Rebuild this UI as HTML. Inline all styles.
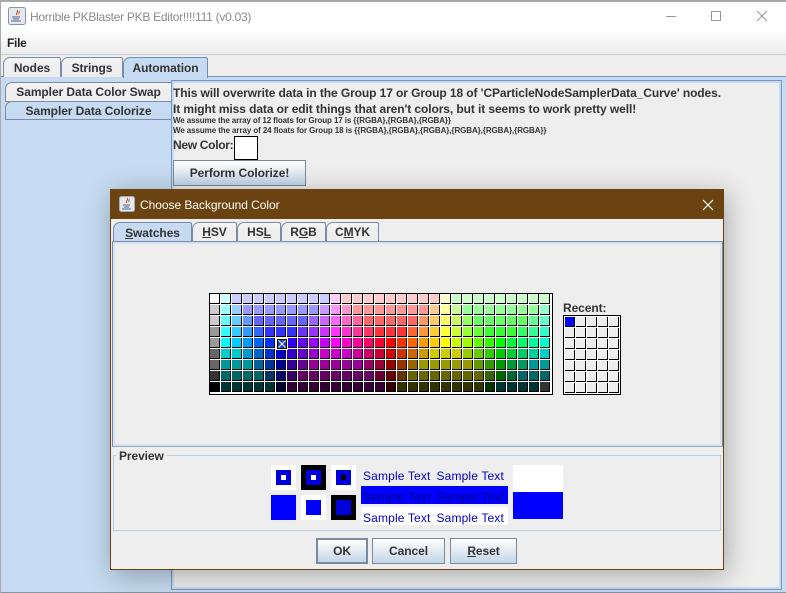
<!DOCTYPE html>
<html><head><meta charset="utf-8"><style>
html,body{margin:0;padding:0;width:786px;height:593px;overflow:hidden;background:#eee}
*{box-sizing:border-box}
body{font-family:"Liberation Sans",sans-serif;color:#333;position:relative}
.a,.t,.btn,.tab{position:absolute}
.t{white-space:nowrap;font-weight:bold;font-size:12px;line-height:14px;color:#333;letter-spacing:-.09px}
u{text-decoration:underline}
.tab{border:1px solid #7a8aa8;border-bottom:none;border-radius:7px 2px 0 0;background:linear-gradient(#f6f6f6,#eee 40%);font-weight:bold;font-size:12px;letter-spacing:-.07px;text-align:center;color:#333;white-space:nowrap}
.btn{border:1px solid #7a8a9c;background:linear-gradient(#fff,#eef2f6 30%,#c3d6e8);font-weight:bold;font-size:12px;letter-spacing:-.07px;text-align:center;color:#333;white-space:nowrap}
#g{left:209px;top:293px;width:344px;height:102px;border:1px solid #000;padding:0 1px 1px 0;background:#fff;display:flex;flex-wrap:wrap;align-content:flex-start}
#g i{display:block;width:10px;height:10px;margin:0 1px 1px 0;border-right:1px solid #000;border-bottom:1px solid #000}
#r{left:563px;top:315px;width:58px;height:80px;border:1px solid #000;padding:1px 0 0 1px;background:#fff;display:flex;flex-wrap:wrap;align-content:flex-start}
#r i{display:block;width:10px;height:10px;margin:0 1px 1px 0;background:#eee;border-right:1px solid #000;border-bottom:1px solid #000}
.s{font-size:12px;color:#0000cc;font-weight:normal;letter-spacing:.15px}
.s span{margin-left:6px}
</style></head><body>
<!-- main window -->
<div class="a" style="left:0;top:0;width:786px;height:2px;background:#a8a8a8"></div>
<div class="a" style="left:0;top:2px;width:786px;height:52px;background:linear-gradient(#fff,#fff 55%,#ececec)"></div>
<div class="a" style="left:0;top:54px;width:786px;height:1px;background:#ccc"></div>
<div class="a" style="left:0;top:0;width:1px;height:593px;background:#aaa"></div>
<svg class="a" style="left:8px;top:7px" width="18" height="18" viewBox="0 0 18 18"><rect x=".5" y=".5" width="17" height="17" rx="2" fill="#e4e8ee" stroke="#8a94a4"/><path d="M9 3c2 2-2 3 0 5M11 4c1 1-1 2 0 3" stroke="#c8501c" fill="none"/><path d="M4 10h8M5 12h6M3 14h10" stroke="#47658f" stroke-width="1"/></svg>
<div class="t" style="left:30px;top:9px;line-height:16px;font-weight:normal;color:#8a8a8a;letter-spacing:-.27px">Horrible PKBlaster PKB Editor!!!!111 (v0.03)</div>
<div class="t" style="left:7px;top:36px;color:#222;letter-spacing:-.3px">File</div>
<svg class="a" style="left:660px;top:8px" width="110" height="16" viewBox="0 0 110 16"><path d="M6 8.5h10" stroke="#999"/><rect x="51.5" y="3.5" width="9" height="9" fill="none" stroke="#999"/><path d="M97 3l10 10M107 3l-10 10" stroke="#999"/></svg>

<!-- blue outer panel -->
<div class="a" style="left:1px;top:76px;width:785px;height:517px;background:#c6dbf1;border-top:1px solid #7a95bd;border-bottom:1px solid #8a94a4"></div>
<div class="tab" style="left:3px;top:57px;width:58px;height:20px;line-height:20px">Nodes</div>
<div class="tab" style="left:61px;top:57px;width:62px;height:20px;line-height:20px">Strings</div>
<div class="tab" style="left:123px;top:57px;width:85px;height:21px;line-height:20px;background:#c6dbf1;border-color:#6f8db8;border-bottom:none">Automation</div>

<!-- vertical tabs -->
<div class="tab" style="left:5px;top:82px;width:167px;height:20px;line-height:19px;border-bottom:1px solid #7a8aa8">Sampler Data Color Swap</div>
<div class="tab" style="left:5px;top:101px;width:167px;height:19px;line-height:19px;background:#c6dbf1;border-bottom:1px solid #7a8aa8">Sampler Data Colorize</div>

<!-- right panel -->
<div class="a" style="left:171px;top:80px;width:611px;height:510px;border:1px solid #7a95bd;background:#eee;box-shadow:inset 0 0 0 2px #c6dbf1"></div>
<div class="a" style="left:174px;top:83px;width:605px;height:504px;background:#eee"></div>
<div class="t" style="left:173px;top:86px">This will overwrite data in the Group 17 or Group 18 of 'CParticleNodeSamplerData_Curve' nodes.</div>
<div class="t" style="left:173px;top:102px">It might miss data or edit things that aren't colors, but it seems to work pretty well!</div>
<div class="t" style="left:173px;top:115px;font-size:8px;line-height:11px;letter-spacing:-.11px">We assume the array of 12 floats for Group 17 is {{RGBA},{RGBA},{RGBA}}</div>
<div class="t" style="left:173px;top:125px;font-size:8px;line-height:11px;letter-spacing:-.09px">We assume the array of 24 floats for Group 18 is {{RGBA},{RGBA},{RGBA},{RGBA},{RGBA},{RGBA}}</div>
<div class="t" style="left:173px;top:138px;letter-spacing:-.3px">New Color:</div>
<div class="a" style="left:234px;top:136px;width:24px;height:24px;background:#fff;border:1px solid #000"></div>
<div class="btn" style="left:173px;top:160px;width:133px;height:26px;line-height:25px">Perform Colorize!</div>

<!-- dialog -->
<div class="a" style="left:110px;top:189px;width:614px;height:381px;background:#eee;border:1px solid #6b4310;border-top:none;box-shadow:3px 5px 26px rgba(0,0,0,.3)"></div>
<div class="a" style="left:110px;top:189px;width:614px;height:30px;background:#6b4310"></div>
<svg class="a" style="left:119px;top:196px" width="16" height="16" viewBox="0 0 16 16"><rect x=".5" y=".5" width="15" height="15" rx="2" fill="#e4e8ee" stroke="#aab"/><path d="M8 2c2 2-2 3 0 5M10 3c1 1-1 2 0 3" stroke="#c8501c" fill="none"/><path d="M4 9h7M5 11h5M3 13h9" stroke="#47658f"/></svg>
<div class="t" style="left:140px;top:198px;font-weight:normal;color:#fff;letter-spacing:-.05px">Choose Background Color</div>
<svg class="a" style="left:701px;top:198px" width="14" height="14" viewBox="0 0 14 14"><path d="M2 2l10 10M12 2L2 12" stroke="#fff" stroke-width="1.2"/></svg>

<div class="tab" style="left:113px;top:222px;width:79px;height:20px;line-height:20px;background:#c6dbf1"><u>S</u>watches</div>
<div class="tab" style="left:192px;top:222px;width:45px;height:19px;line-height:19px"><u>H</u>SV</div>
<div class="tab" style="left:237px;top:222px;width:44px;height:19px;line-height:19px">HS<u>L</u></div>
<div class="tab" style="left:281px;top:222px;width:45px;height:19px;line-height:19px">R<u>G</u>B</div>
<div class="tab" style="left:326px;top:222px;width:53px;height:19px;line-height:19px">C<u>M</u>YK</div>
<div class="a" style="left:112px;top:241px;width:611px;height:206px;border:1px solid #7a8aa8;border-bottom-color:#9aa6ba;background:#eee;box-shadow:inset 0 0 0 2px #d5e2f0"></div>
<div class="a" style="left:192px;top:241px;width:531px;height:1px;background:#7a8aa8"></div>

<div class="a" id="g"><i style="background:#fff"></i><i style="background:#cff"></i><i style="background:#ccf"></i><i style="background:#ccf"></i><i style="background:#ccf"></i><i style="background:#ccf"></i><i style="background:#ccf"></i><i style="background:#ccf"></i><i style="background:#ccf"></i><i style="background:#ccf"></i><i style="background:#ccf"></i><i style="background:#fcf"></i><i style="background:#fcc"></i><i style="background:#fcc"></i><i style="background:#fcc"></i><i style="background:#fcc"></i><i style="background:#fcc"></i><i style="background:#fcc"></i><i style="background:#fcc"></i><i style="background:#fcc"></i><i style="background:#fcc"></i><i style="background:#ffc"></i><i style="background:#cfc"></i><i style="background:#cfc"></i><i style="background:#cfc"></i><i style="background:#cfc"></i><i style="background:#cfc"></i><i style="background:#cfc"></i><i style="background:#cfc"></i><i style="background:#cfc"></i><i style="background:#cfc"></i><i style="background:#ccc"></i><i style="background:#9ff"></i><i style="background:#9cf"></i><i style="background:#99f"></i><i style="background:#99f"></i><i style="background:#99f"></i><i style="background:#99f"></i><i style="background:#99f"></i><i style="background:#99f"></i><i style="background:#99f"></i><i style="background:#c9f"></i><i style="background:#f9f"></i><i style="background:#f9c"></i><i style="background:#f99"></i><i style="background:#f99"></i><i style="background:#f99"></i><i style="background:#f99"></i><i style="background:#f99"></i><i style="background:#f99"></i><i style="background:#f99"></i><i style="background:#fc9"></i><i style="background:#ff9"></i><i style="background:#cf9"></i><i style="background:#9f9"></i><i style="background:#9f9"></i><i style="background:#9f9"></i><i style="background:#9f9"></i><i style="background:#9f9"></i><i style="background:#9f9"></i><i style="background:#9f9"></i><i style="background:#9fc"></i><i style="background:#ccc"></i><i style="background:#6ff"></i><i style="background:#6cf"></i><i style="background:#69f"></i><i style="background:#66f"></i><i style="background:#66f"></i><i style="background:#66f"></i><i style="background:#66f"></i><i style="background:#66f"></i><i style="background:#96f"></i><i style="background:#c6f"></i><i style="background:#f6f"></i><i style="background:#f6c"></i><i style="background:#f69"></i><i style="background:#f66"></i><i style="background:#f66"></i><i style="background:#f66"></i><i style="background:#f66"></i><i style="background:#f66"></i><i style="background:#f96"></i><i style="background:#fc6"></i><i style="background:#ff6"></i><i style="background:#cf6"></i><i style="background:#9f6"></i><i style="background:#6f6"></i><i style="background:#6f6"></i><i style="background:#6f6"></i><i style="background:#6f6"></i><i style="background:#6f6"></i><i style="background:#6f9"></i><i style="background:#6fc"></i><i style="background:#999"></i><i style="background:#3ff"></i><i style="background:#3cf"></i><i style="background:#39f"></i><i style="background:#36f"></i><i style="background:#33f"></i><i style="background:#33f"></i><i style="background:#33f"></i><i style="background:#63f"></i><i style="background:#93f"></i><i style="background:#c3f"></i><i style="background:#f3f"></i><i style="background:#f3c"></i><i style="background:#f39"></i><i style="background:#f36"></i><i style="background:#f33"></i><i style="background:#f33"></i><i style="background:#f33"></i><i style="background:#f63"></i><i style="background:#f93"></i><i style="background:#fc3"></i><i style="background:#ff3"></i><i style="background:#cf3"></i><i style="background:#9f3"></i><i style="background:#6f3"></i><i style="background:#3f3"></i><i style="background:#3f3"></i><i style="background:#3f3"></i><i style="background:#3f6"></i><i style="background:#3f9"></i><i style="background:#3fc"></i><i style="background:#999"></i><i style="background:#0ff"></i><i style="background:#0cf"></i><i style="background:#09f"></i><i style="background:#06f"></i><i style="background:#03f"></i><i style="background:#00f"></i><i style="background:#30f"></i><i style="background:#60f"></i><i style="background:#90f"></i><i style="background:#c0f"></i><i style="background:#f0f"></i><i style="background:#f0c"></i><i style="background:#f09"></i><i style="background:#f06"></i><i style="background:#f03"></i><i style="background:#f00"></i><i style="background:#f30"></i><i style="background:#f60"></i><i style="background:#f90"></i><i style="background:#fc0"></i><i style="background:#ff0"></i><i style="background:#cf0"></i><i style="background:#9f0"></i><i style="background:#6f0"></i><i style="background:#3f0"></i><i style="background:#0f0"></i><i style="background:#0f3"></i><i style="background:#0f6"></i><i style="background:#0f9"></i><i style="background:#0fc"></i><i style="background:#666"></i><i style="background:#0cc"></i><i style="background:#0cc"></i><i style="background:#09c"></i><i style="background:#06c"></i><i style="background:#03c"></i><i style="background:#00c"></i><i style="background:#30c"></i><i style="background:#60c"></i><i style="background:#90c"></i><i style="background:#c0c"></i><i style="background:#c0c"></i><i style="background:#c0c"></i><i style="background:#c09"></i><i style="background:#c06"></i><i style="background:#c03"></i><i style="background:#c00"></i><i style="background:#c30"></i><i style="background:#c60"></i><i style="background:#c90"></i><i style="background:#cc0"></i><i style="background:#cc0"></i><i style="background:#cc0"></i><i style="background:#9c0"></i><i style="background:#6c0"></i><i style="background:#3c0"></i><i style="background:#0c0"></i><i style="background:#0c3"></i><i style="background:#0c6"></i><i style="background:#0c9"></i><i style="background:#0cc"></i><i style="background:#666"></i><i style="background:#099"></i><i style="background:#099"></i><i style="background:#099"></i><i style="background:#069"></i><i style="background:#039"></i><i style="background:#009"></i><i style="background:#309"></i><i style="background:#609"></i><i style="background:#909"></i><i style="background:#909"></i><i style="background:#909"></i><i style="background:#909"></i><i style="background:#909"></i><i style="background:#906"></i><i style="background:#903"></i><i style="background:#900"></i><i style="background:#930"></i><i style="background:#960"></i><i style="background:#990"></i><i style="background:#990"></i><i style="background:#990"></i><i style="background:#990"></i><i style="background:#990"></i><i style="background:#690"></i><i style="background:#390"></i><i style="background:#090"></i><i style="background:#093"></i><i style="background:#096"></i><i style="background:#099"></i><i style="background:#099"></i><i style="background:#333"></i><i style="background:#066"></i><i style="background:#066"></i><i style="background:#066"></i><i style="background:#066"></i><i style="background:#036"></i><i style="background:#006"></i><i style="background:#306"></i><i style="background:#606"></i><i style="background:#606"></i><i style="background:#606"></i><i style="background:#606"></i><i style="background:#606"></i><i style="background:#606"></i><i style="background:#606"></i><i style="background:#603"></i><i style="background:#600"></i><i style="background:#630"></i><i style="background:#660"></i><i style="background:#660"></i><i style="background:#660"></i><i style="background:#660"></i><i style="background:#660"></i><i style="background:#660"></i><i style="background:#660"></i><i style="background:#360"></i><i style="background:#060"></i><i style="background:#063"></i><i style="background:#066"></i><i style="background:#066"></i><i style="background:#066"></i><i style="background:#000"></i><i style="background:#033"></i><i style="background:#033"></i><i style="background:#033"></i><i style="background:#033"></i><i style="background:#033"></i><i style="background:#003"></i><i style="background:#303"></i><i style="background:#303"></i><i style="background:#303"></i><i style="background:#303"></i><i style="background:#303"></i><i style="background:#303"></i><i style="background:#303"></i><i style="background:#303"></i><i style="background:#303"></i><i style="background:#300"></i><i style="background:#330"></i><i style="background:#330"></i><i style="background:#330"></i><i style="background:#330"></i><i style="background:#330"></i><i style="background:#330"></i><i style="background:#330"></i><i style="background:#330"></i><i style="background:#030"></i><i style="background:#033"></i><i style="background:#033"></i><i style="background:#033"></i><i style="background:#033"></i><i style="background:#333"></i></div>
<!-- selected swatch marker -->
<div class="a" style="left:276px;top:338px;width:12px;height:12px;background:#ffffb0"></div>
<svg class="a" style="left:277px;top:339px" width="10" height="10" viewBox="0 0 10 10"><rect x=".5" y=".5" width="9" height="9" fill="#1a40d8" stroke="#000"/><path d="M1.5 1.5l7 7M8.5 1.5l-7 7" stroke="#fff"/></svg>

<div class="t" style="left:563px;top:301px">Recent:</div>
<div class="a" id="r"><i style="background:#00f"></i><i></i><i></i><i></i><i></i><i></i><i></i><i></i><i></i><i></i><i></i><i></i><i></i><i></i><i></i><i></i><i></i><i></i><i></i><i></i><i></i><i></i><i></i><i></i><i></i><i></i><i></i><i></i><i></i><i></i><i></i><i></i><i></i><i></i><i></i></div>

<!-- preview -->
<div class="a" style="left:113px;top:455px;width:608px;height:76px;border:1px solid #b8cde0"></div>
<div class="t" style="left:116px;top:449px;background:#eee;padding:0 3px">Preview</div>

<div class="a" style="left:271px;top:465px;width:25px;height:25px;background:#fff"></div>
<div class="a" style="left:276px;top:470px;width:15px;height:15px;background:#00d"></div>
<div class="a" style="left:281px;top:475px;width:5px;height:5px;background:#fff"></div>
<div class="a" style="left:301px;top:465px;width:25px;height:25px;background:#000"></div>
<div class="a" style="left:306px;top:470px;width:15px;height:15px;background:#00d"></div>
<div class="a" style="left:311px;top:475px;width:5px;height:5px;background:#fff"></div>
<div class="a" style="left:331px;top:465px;width:25px;height:25px;background:#fff"></div>
<div class="a" style="left:336px;top:470px;width:15px;height:15px;background:#00d"></div>
<div class="a" style="left:341px;top:475px;width:5px;height:5px;background:#000"></div>
<div class="a" style="left:271px;top:495px;width:25px;height:25px;background:#00f"></div>
<div class="a" style="left:301px;top:495px;width:25px;height:25px;background:#fff"></div>
<div class="a" style="left:306px;top:500px;width:15px;height:15px;background:#00f"></div>
<div class="a" style="left:331px;top:495px;width:25px;height:25px;background:#000"></div>
<div class="a" style="left:336px;top:500px;width:15px;height:15px;background:#00d"></div>

<div class="t s" style="left:363px;top:469px">Sample Text<span>Sample Text</span></div>
<div class="a" style="left:361px;top:486px;width:147px;height:18px;background:#00f"></div>
<div class="t s" style="left:363px;top:490px;color:#000080">Sample Text<span>Sample Text</span></div>
<div class="a" style="left:361px;top:507px;width:147px;height:18px;background:#fff"></div>
<div class="t s" style="left:363px;top:511px">Sample Text<span>Sample Text</span></div>
<div class="a" style="left:513px;top:465px;width:50px;height:27px;background:#fff"></div>
<div class="a" style="left:513px;top:492px;width:50px;height:27px;background:#00f"></div>

<div class="btn" style="left:316px;top:538px;width:52px;height:26px;line-height:23px;border:2px solid #7a8a9c">OK</div>
<div class="btn" style="left:372px;top:538px;width:73px;height:26px;line-height:25px">Cancel</div>
<div class="btn" style="left:450px;top:538px;width:67px;height:26px;line-height:25px"><u>R</u>eset</div>
</body></html>
